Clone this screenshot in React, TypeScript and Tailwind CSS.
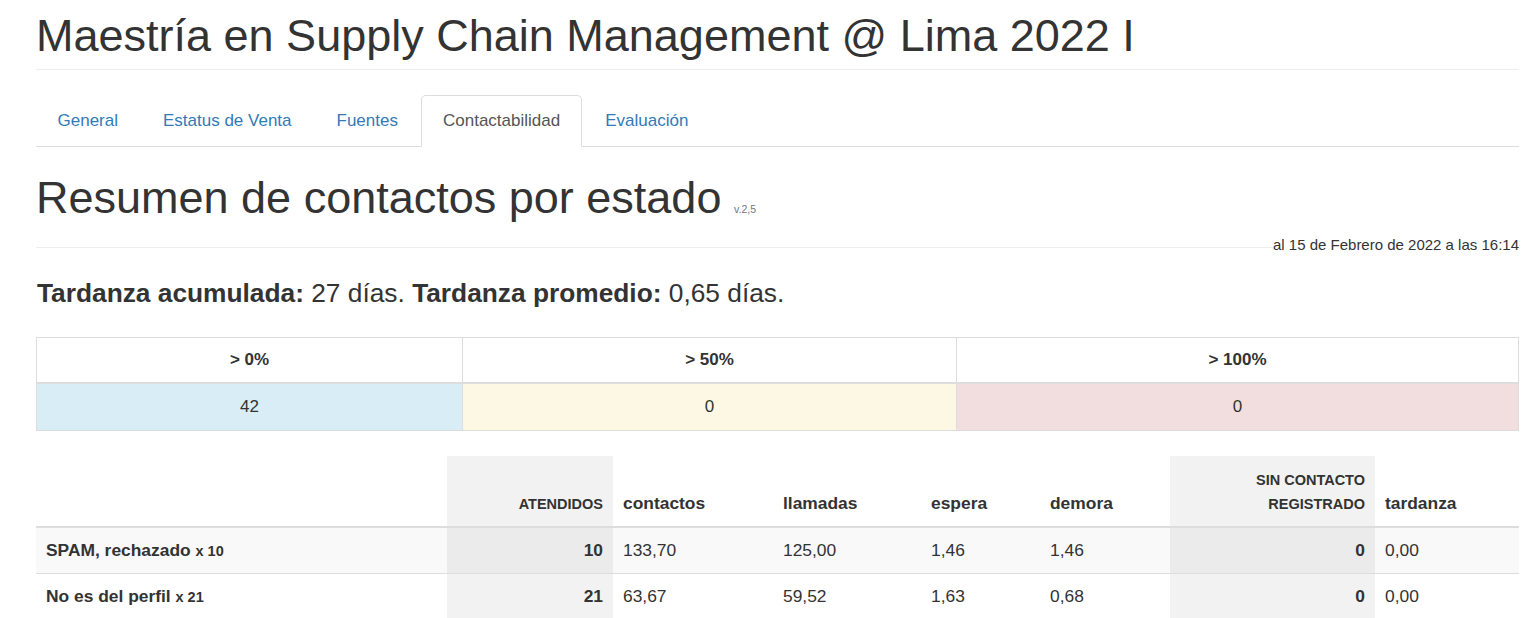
import React from 'react';

const TABS = ['General', 'Estatus de Venta', 'Fuentes', 'Contactabilidad', 'Evaluación'];

const RANGES = [
  { label: '> 0%', value: '42', bg: 'bg-[#d9edf7]' },
  { label: '> 50%', value: '0', bg: 'bg-[#fcf8e3]' },
  { label: '> 100%', value: '0', bg: 'bg-[#f2dede]' },
];

const ROWS = [
  { name: 'SPAM, rechazado', n: 10, contactos: '133,70', llamadas: '125,00', espera: '1,46', demora: '1,46', sin: 0, tardanza: '0,00' },
  { name: 'No es del perfil', n: 21, contactos: '63,67', llamadas: '59,52', espera: '1,63', demora: '0,68', sin: 0, tardanza: '0,00' },
];

const App: React.FC = () => {
  return (
    <div
      className="min-h-screen bg-white pl-[36px] pr-[18px] text-[#333] text-[17px]"
      style={{ fontFamily: '"Liberation Sans", Arial, sans-serif' }}
    >
      <h1 className="mt-[12px] pb-[9px] border-b border-[#eee] text-[45px] leading-[48.4px] font-normal">
        Maestría en Supply Chain Management @ Lima 2022 I
      </h1>

      {/* Tabs */}
      <ul className="mt-[25px] flex border-b border-[#ddd]">
        {TABS.map((tab) => {
          const active = tab === 'Contactabilidad';
          return (
            <li key={tab} className="-mb-px mr-[2px]">
              <a
                href="#"
                className={`block px-[20.5px] py-[13px] leading-[24px] rounded-t-[5px] border ${
                  active
                    ? 'border-[#ddd] border-b-white bg-white text-[#555]'
                    : 'border-transparent text-[#337ab7]'
                }`}
              >
                {tab}
              </a>
            </li>
          );
        })}
      </ul>

      <h1 className="mt-[27px] text-[45px] leading-[48.4px] font-normal">
        Resumen de contactos por estado{' '}
        <small className="text-[10.6px] leading-none text-[#777]">v.2,5</small>
      </h1>

      <div className="mt-[12px] flex items-end">
        <div className="flex-1 h-px bg-[#eee] mb-[7px]" />
        <span className="text-[15px] leading-[20px]">al 15 de Febrero de 2022 a las 16:14</span>
      </div>

      <h4 className="mt-[24px] ml-px text-[26.3px] leading-[28.6px]">
        <b>Tardanza acumulada:</b> 27 días. <b>Tardanza promedio:</b> 0,65 días.
      </h4>

      {/* Ranges */}
      <table className="mt-[30px] w-[1483px] table-fixed border-separate border-spacing-0 border-l border-t border-[#ddd]">
        <colgroup>
          <col className="w-[426px]" />
          <col className="w-[494px]" />
          <col className="w-[562px]" />
        </colgroup>
        <thead>
          <tr>
            {RANGES.map((r) => (
              <th key={r.label} className="border-r border-b-2 border-[#ddd] py-[10px] leading-[24px] font-bold text-center">
                {r.label}
              </th>
            ))}
          </tr>
        </thead>
        <tbody>
          <tr>
            {RANGES.map((r) => (
              <td key={r.label} className={`border-r border-b border-[#ddd] py-[11px] leading-[24px] text-center ${r.bg}`}>
                {r.value}
              </td>
            ))}
          </tr>
        </tbody>
      </table>

      {/* Detail */}
      <table className="mt-[25px] w-[1483px] table-fixed border-separate border-spacing-0 text-[17.4px]">
        <colgroup>
          <col className="w-[411px]" />
          <col className="w-[166px]" />
          <col className="w-[160px]" />
          <col className="w-[148px]" />
          <col className="w-[119px]" />
          <col className="w-[130px]" />
          <col className="w-[205px]" />
          <col className="w-[144px]" />
        </colgroup>
        <thead>
          <tr className="align-bottom">
            <th className="border-b-2 border-[#ddd] px-[10px] py-[11px] leading-[24px]" />
            <th className="border-b-2 border-[#ddd] bg-[#f2f2f2] px-[10px] py-[11px] leading-[24px] text-right">
              <small className="text-[14.5px] leading-none font-bold">ATENDIDOS</small>
            </th>
            {['contactos', 'llamadas', 'espera', 'demora'].map((h) => (
              <th key={h} className="border-b-2 border-[#ddd] px-[10px] py-[11px] leading-[24px] text-left font-bold">
                {h}
              </th>
            ))}
            <th className="border-b-2 border-[#ddd] bg-[#f2f2f2] px-[10px] py-[11px] leading-[24px] text-right">
              <small className="text-[14.5px] leading-none font-bold">
                SIN CONTACTO
                <br />
                REGISTRADO
              </small>
            </th>
            <th className="border-b-2 border-[#ddd] px-[10px] py-[11px] leading-[24px] text-left font-bold">tardanza</th>
          </tr>
        </thead>
        <tbody>
          {ROWS.map((row, i) => {
            const striped = i % 2 === 0;
            const cell = `px-[10px] py-[10px] leading-[25px] ${i > 0 ? 'border-t border-[#ddd]' : ''}`;
            const gray = striped ? 'bg-[#ebebeb]' : 'bg-[#f2f2f2]';
            return (
              <tr key={row.name} className={striped ? 'bg-[#f9f9f9]' : 'bg-white'}>
                <td className={`${cell} font-bold`}>
                  {row.name} <small className="text-[14.5px] leading-none">x {row.n}</small>
                </td>
                <td className={`${cell} ${gray} text-right font-bold`}>{row.n}</td>
                <td className={cell}>{row.contactos}</td>
                <td className={cell}>{row.llamadas}</td>
                <td className={cell}>{row.espera}</td>
                <td className={cell}>{row.demora}</td>
                <td className={`${cell} ${gray} text-right font-bold`}>{row.sin}</td>
                <td className={cell}>{row.tardanza}</td>
              </tr>
            );
          })}
        </tbody>
      </table>
    </div>
  );
};

export default App;
